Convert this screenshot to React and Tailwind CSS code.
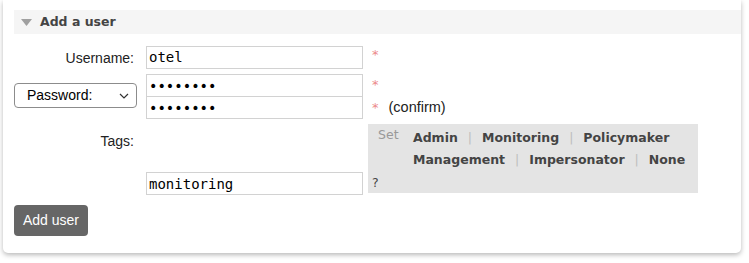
export default function App() {
  const sans = { fontFamily: '"Liberation Sans", Arial, sans-serif' };
  const verdana = { fontFamily: '"DejaVu Sans", Verdana, sans-serif' };
  const mono = { fontFamily: '"DejaVu Sans Mono", monospace' };

  const inputCls =
    "w-[217px] h-[23px] border border-[#d2d2d2] bg-white px-[2px] text-[14px] text-black outline-none";

  const Star = () => (
    <span className="text-[#ec8a8a] text-[13px] leading-none" style={verdana}>
      *
    </span>
  );

  const Sep = () => <span className="mx-[10px] text-[#bdbdbd] font-normal">|</span>;

  return (
    <div className="min-h-screen bg-white px-[3px]">
      <div className="w-[738px] bg-white rounded-b-[5px] shadow-[0_2px_5px_rgba(0,0,0,0.28)] pl-[11px] pt-[10px] pb-[17px]">
        {/* section header */}
        <div className="h-[24px] bg-[#f5f5f5] flex items-center pl-[7px]">
          <svg width="11" height="7" viewBox="0 0 11 7" className="mr-[8px]">
            <path d="M0 0 H11 L5.5 7 Z" fill="#a0a0a0" />
          </svg>
          <span className="font-bold text-[12.5px] text-[#444]" style={verdana}>
            Add a user
          </span>
        </div>

        <div className="mt-[11px] text-[#222]" style={sans}>
          {/* username */}
          <div className="flex items-center">
            <label className="w-[120px] text-right text-[14px] pt-[3px]">Username:</label>
            <input
              className={inputCls + " ml-[12px]"}
              style={mono}
              defaultValue="otel"
              readOnly
            />
            <span className="ml-[9px] -mt-[6px]">
              <Star />
            </span>
          </div>

          {/* password */}
          <div className="flex items-center mt-[5px]">
            <div className="w-[123px] h-[25px] border border-[#8c8c8c] rounded-[4px] flex items-center justify-between pl-[12px] pr-[7px] text-[14px] text-black mt-[-2px]">
              <span>Password:</span>
              <svg width="10" height="6" viewBox="0 0 10 6">
                <path d="M1 1 L5 5 L9 1" stroke="#333" strokeWidth="1.2" fill="none" />
              </svg>
            </div>
            <div className="ml-[9px] flex flex-col">
              <div className="flex items-center">
                <input
                  type="password"
                  className={inputCls}
                  style={mono}
                  defaultValue="password"
                  readOnly
                />
                <span className="ml-[9px] -mt-[4px]">
                  <Star />
                </span>
              </div>
              <div className="flex items-center">
                <input
                  type="password"
                  className={inputCls + " -mt-px"}
                  style={mono}
                  defaultValue="password"
                  readOnly
                />
                <span className="ml-[9px] -mt-[2px]">
                  <Star />
                </span>
                <span className="ml-[10px] text-[14.5px]">(confirm)</span>
              </div>
            </div>
          </div>

          {/* tags */}
          <div className="flex mt-[5px]">
            <label className="w-[120px] text-right text-[14px] pt-[7px]">Tags:</label>
            <div className="ml-[12px] flex items-end">
              <input
                className={inputCls}
                style={mono}
                defaultValue="monitoring"
                readOnly
              />
              <div className="ml-[5px] mb-[2px] w-[330px] h-[69px] bg-[#e4e4e4] flex flex-col">
                <div className="flex items-start pt-[3px] pl-[10px]">
                  <span className="w-[35px] text-[#999] text-[12.5px] leading-[16px]" style={verdana}>
                    Set
                  </span>
                  <div className="font-bold text-[12.5px] text-[#444] leading-[22px]" style={verdana}>
                    <div className="flex">
                      <span>Admin</span>
                      <Sep />
                      <span>Monitoring</span>
                      <Sep />
                      <span>Policymaker</span>
                    </div>
                    <div className="flex">
                      <span>Management</span>
                      <Sep />
                      <span>Impersonator</span>
                      <Sep />
                      <span>None</span>
                    </div>
                  </div>
                </div>
                <div className="pl-[4px] text-[12.5px] text-[#444] leading-[18px] mt-auto mb-[1px]" style={verdana}>
                  ?
                </div>
              </div>
            </div>
          </div>

          {/* submit */}
          <button className="mt-[10px] h-[31px] px-[9px] bg-[#666] text-white text-[14px] rounded-[4px]">
            Add user
          </button>
        </div>
      </div>
    </div>
  );
}
